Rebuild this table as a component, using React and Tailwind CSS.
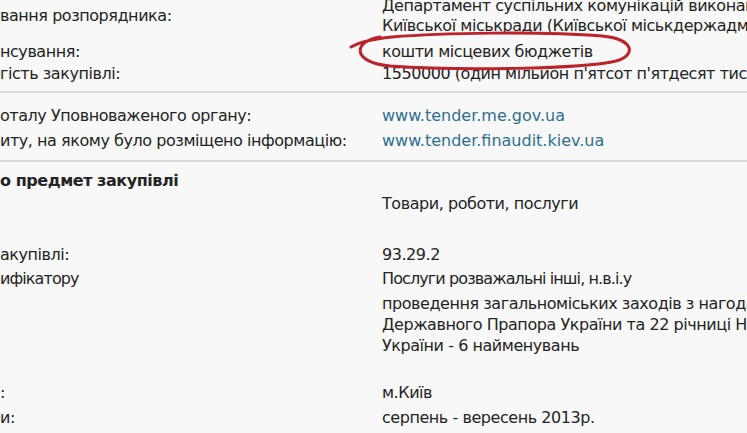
const Row = ({ label, children, className = '' }) => (
  <div className={`flex ${className}`}>
    <div className="w-[382px] shrink-0 flex items-center">{label}</div>
    <div className="whitespace-nowrap">{children}</div>
  </div>
)

const Divider = ({ className = 'my-[7px]' }) => <div className={`h-[2px] bg-[#dadada] ${className}`} />

export default function App() {
  return (
    <div className="relative w-[747px] h-[433px] overflow-hidden bg-[#f8f8f8] text-[#242424] text-[16px] leading-[20px] tracking-[-0.45px] font-['DejaVu_Sans',Verdana,sans-serif]">
      <div className="-mt-[6px]">
        <Row label="вання розпорядника:" className="py-[2px]">
          <div>Департамент суспільних комунікацій виконавчого органу</div>
          <div>Київської міськради (Київської міськдержадміністрації)</div>
        </Row>
        <Row label="нсування:" className="pt-[4px] pb-[1px]">кошти місцевих бюджетів</Row>
        <Row label="гість закупівлі:" className="py-[1px]">
          1550000 (один мільион п'ятсот п'ятдесят тисяч) гривень
        </Row>
      </div>

      <Divider className="mt-[6px] mb-[7px]" />

      <div className="pt-[4px]">
        <Row label="оталу Уповноваженого органу:" className="py-[2px]">
          <span className="text-[#2f6f8f] tracking-normal">www.tender.me.gov.ua</span>
        </Row>
        <Row label="иту, на якому було розміщено інформацію:" className="pt-[3px] pb-[2px]">
          <span className="text-[#2f6f8f] tracking-normal">www.tender.finaudit.kiev.ua</span>
        </Row>
      </div>

      <Divider className="mt-[7px] mb-[8px]" />

      <div>
        <div className="font-bold py-[1px]">о предмет закупівлі</div>
        <Row label="" className="py-[2px]">Товари, роботи, послуги</Row>
        <div className="h-[27px]" />
        <Row label="акупівлі:" className="py-[2px]">93.29.2</Row>
        <Row label="ифікатору" className="py-[2px] tracking-[-0.9px]">Послуги розважальні інші, н.в.і.у</Row>
        <Row label="" className="py-[2px] leading-[21px]">
          <div>проведення загальноміських заходів з нагоди Дня</div>
          <div>Державного Прапора України та 22 річниці Незалежності</div>
          <div>України - 6 найменувань</div>
        </Row>
        <div className="h-[23px]" />
        <Row label=":" className="py-[2px]">м.Київ</Row>
        <Row label="и:" className="py-[3px]">серпень - вересень 2013р.</Row>
      </div>

      {/* hand-drawn red loop */}
      <svg className="absolute left-0 top-0 pointer-events-none" width="747" height="433" viewBox="0 0 747 433">
        <path
          d="M380 37 C 354 41, 350 62, 390 66 C 460 71, 582 69, 616 61 C 637 55, 634 39, 602 36 C 540 31, 440 33, 392 37 C 372 39, 358 43, 351 47"
          fill="none"
          stroke="#bb2229"
          strokeWidth="3"
          strokeLinecap="round"
        />
      </svg>
    </div>
  )
}
